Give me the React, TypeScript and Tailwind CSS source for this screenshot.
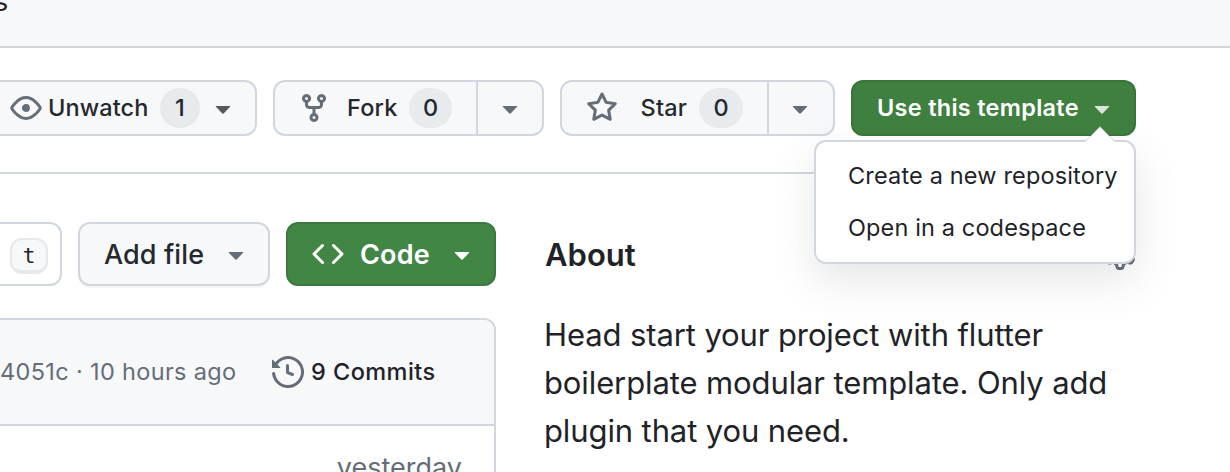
import type { ReactNode } from "react";

const ICONS = {
  eye: "M8 2c1.981 0 3.671.992 4.933 2.078 1.27 1.091 2.187 2.345 2.637 3.023a1.62 1.62 0 0 1 0 1.798c-.45.678-1.367 1.932-2.637 3.023C11.67 13.008 9.981 14 8 14c-1.981 0-3.671-.992-4.933-2.078C1.797 10.83.88 9.576.43 8.898a1.62 1.62 0 0 1 0-1.798c.45-.677 1.367-1.931 2.637-3.022C4.33 2.992 6.019 2 8 2ZM1.679 7.932a.12.12 0 0 0 0 .136c.411.622 1.241 1.75 2.366 2.717C5.176 11.758 6.527 12.5 8 12.5c1.473 0 2.825-.742 3.955-1.715 1.124-.967 1.954-2.096 2.366-2.717a.12.12 0 0 0 0-.136c-.412-.621-1.242-1.75-2.366-2.717C10.824 4.242 9.473 3.5 8 3.5c-1.473 0-2.825.742-3.955 1.715-1.124.967-1.954 2.096-2.366 2.717ZM8 10a2 2 0 1 1-.001-3.999A2 2 0 0 1 8 10Z",
  fork: "M5 5.372v.878c0 .414.336.75.75.75h4.5a.75.75 0 0 0 .75-.75v-.878a2.25 2.25 0 1 1 1.5 0v.878a2.25 2.25 0 0 1-2.25 2.25h-1.5v2.128a2.251 2.251 0 1 1-1.5 0V8.5h-1.5A2.25 2.25 0 0 1 3.5 6.25v-.878a2.25 2.25 0 1 1 1.5 0ZM5 3.25a.75.75 0 1 0-1.5 0 .75.75 0 0 0 1.5 0Zm6.75.75a.75.75 0 1 0 0-1.5.75.75 0 0 0 0 1.5Zm-3 8.75a.75.75 0 1 0-1.5 0 .75.75 0 0 0 1.5 0Z",
  star: "M8 .25a.75.75 0 0 1 .673.418l1.882 3.815 4.21.612a.75.75 0 0 1 .416 1.279l-3.046 2.97.719 4.192a.751.751 0 0 1-1.088.791L8 12.347l-3.766 1.98a.75.75 0 0 1-1.088-.79l.72-4.194L.818 6.374a.75.75 0 0 1 .416-1.28l4.21-.611L7.327.668A.75.75 0 0 1 8 .25Zm0 2.445L6.615 5.5a.75.75 0 0 1-.564.41l-3.097.45 2.24 2.184a.75.75 0 0 1 .216.664l-.528 3.084 2.769-1.456a.75.75 0 0 1 .698 0l2.77 1.456-.53-3.084a.75.75 0 0 1 .216-.664l2.24-2.183-3.096-.45a.75.75 0 0 1-.564-.41L8 2.694Z",
  code: "m11.28 3.22 4.25 4.25a.75.75 0 0 1 0 1.06l-4.25 4.25a.749.749 0 0 1-1.275-.326.749.749 0 0 1 .215-.734L13.94 8l-3.72-3.72a.749.749 0 0 1 .326-1.275.749.749 0 0 1 .734.215Zm-6.56 0a.751.751 0 0 1 1.042.018.751.751 0 0 1 .018 1.042L2.06 8l3.72 3.72a.749.749 0 0 1-.326 1.275.749.749 0 0 1-.734-.215L.47 8.53a.75.75 0 0 1 0-1.06Z",
  caret:
    "m4.427 7.427 3.396 3.396a.25.25 0 0 0 .354 0l3.396-3.396A.25.25 0 0 0 11.396 7H4.604a.25.25 0 0 0-.177.427Z",
  history:
    "m.427 1.927 1.215 1.215a8.002 8.002 0 1 1-1.6 5.685.75.75 0 1 1 1.493-.154 6.5 6.5 0 1 0 1.18-4.458l1.358 1.358A.25.25 0 0 1 3.896 6H.25A.25.25 0 0 1 0 5.75V2.104a.25.25 0 0 1 .427-.177ZM7.75 4a.75.75 0 0 1 .75.75v2.992l2.028.812a.75.75 0 0 1-.557 1.392l-2.5-1A.751.751 0 0 1 7 8.25v-3.5A.75.75 0 0 1 7.75 4Z",
  gear: "M8 0a8.2 8.2 0 0 1 .701.031C9.444.095 9.99.645 10.16 1.29l.288 1.107c.018.066.079.158.212.224.231.114.454.243.668.386.123.082.233.09.299.071l1.103-.303c.644-.176 1.392.021 1.82.63.27.385.506.792.704 1.218.315.675.111 1.422-.364 1.891l-.814.806c-.049.048-.098.147-.088.294.016.257.016.515 0 .772-.01.147.038.246.088.294l.814.806c.475.469.679 1.216.364 1.891a7.977 7.977 0 0 1-.704 1.217c-.428.61-1.176.807-1.82.63l-1.102-.302c-.067-.019-.177-.011-.3.071a5.909 5.909 0 0 1-.668.386c-.133.066-.194.158-.211.224l-.29 1.106c-.168.646-.715 1.196-1.458 1.26a8.006 8.006 0 0 1-1.402 0c-.743-.064-1.289-.614-1.458-1.26l-.289-1.106c-.018-.066-.079-.158-.212-.224a5.738 5.738 0 0 1-.668-.386c-.123-.082-.233-.09-.299-.071l-1.103.303c-.644.176-1.392-.021-1.82-.63a8.12 8.12 0 0 1-.704-1.218c-.315-.675-.111-1.422.363-1.891l.815-.806c.05-.048.098-.147.088-.294a6.214 6.214 0 0 1 0-.772c.01-.147-.038-.246-.088-.294l-.815-.806C.635 6.045.431 5.298.746 4.623a7.92 7.92 0 0 1 .704-1.217c.428-.61 1.176-.807 1.82-.63l1.102.302c.067.019.177.011.3-.071.214-.143.437-.272.668-.386.133-.066.194-.158.211-.224l.29-1.106C6.009.645 6.556.095 7.299.03 7.53.01 7.764 0 8 0Zm-.571 1.525c-.036.003-.108.036-.137.146l-.289 1.105c-.147.561-.549.967-.998 1.189-.173.086-.34.183-.5.29-.417.278-.97.423-1.529.27l-1.103-.303c-.109-.03-.175.016-.195.045-.22.312-.412.644-.573.99-.014.031-.021.11.059.19l.815.806c.411.406.562.957.53 1.456a4.709 4.709 0 0 0 0 .582c.032.499-.119 1.05-.53 1.456l-.815.806c-.081.08-.073.159-.059.19.162.346.353.677.573.989.02.03.085.076.195.046l1.102-.303c.56-.153 1.113-.008 1.53.27.161.107.328.204.501.29.447.222.85.629.997 1.189l.289 1.105c.029.109.101.143.137.146a6.6 6.6 0 0 0 1.142 0c.036-.003.108-.036.137-.146l.289-1.105c.147-.561.549-.967.998-1.189.173-.086.34-.183.5-.29.417-.278.97-.423 1.529-.27l1.103.303c.109.029.175-.016.195-.045.22-.313.411-.644.573-.99.014-.031.021-.11-.059-.19l-.815-.806c-.411-.406-.562-.957-.53-1.456a4.709 4.709 0 0 0 0-.582c-.032-.499.119-1.05.53-1.456l.815-.806c.081-.08.073-.159.059-.19a6.464 6.464 0 0 0-.573-.989c-.02-.03-.085-.076-.195-.046l-1.102.303c-.56.153-1.113.008-1.53-.27a4.44 4.44 0 0 0-.501-.29c-.447-.222-.85-.629-.997-1.189l-.289-1.105c-.029-.11-.101-.143-.137-.146a6.6 6.6 0 0 0-1.142 0ZM11 8a3 3 0 1 1-6 0 3 3 0 0 1 6 0ZM9.5 8a1.5 1.5 0 1 0-3.001.001A1.5 1.5 0 0 0 9.5 8Z",
};

function Icon({ name, className = "" }: { name: keyof typeof ICONS; className?: string }) {
  return (
    <svg viewBox="0 0 16 16" fill="currentColor" className={`size-8 shrink-0 ${className}`} aria-hidden="true">
      <path d={ICONS[name]} />
    </svg>
  );
}

function Counter({ children, className }: { children: ReactNode; className: string }) {
  return (
    <span className={`flex h-10 shrink-0 items-center justify-center rounded-full bg-[#e7ebed] ${className}`}>
      {children}
    </span>
  );
}

const outlineButton = "flex shrink-0 items-center rounded-xl border-2 border-[#d1d7de] bg-[#f6f8fa] text-[#25292e]";

export default function App() {
  return (
    <div className="flex h-[472px] w-[1230px] flex-col overflow-hidden bg-white font-['Inter',sans-serif] whitespace-nowrap text-[#1f2328]">
      <header className="h-12 shrink-0 overflow-hidden border-b-2 border-[#d1d7de] bg-[#f6f8fa]">
        <span className="-mt-[14px] -ml-[6px] block text-[27px] leading-8">s</span>
      </header>

      <div className="mr-[94px] flex h-[126px] shrink-0 items-start gap-4 border-b-2 border-[#d1d7de] pt-8 text-[23.5px] font-medium">
        <button className={`${outlineButton} -ml-5 h-14 w-[277px] pl-7`}>
          <Icon name="eye" className="text-[#656d76]" />
          <span className="ml-[6px] w-[112px] text-left tracking-[0.1px]">Unwatch</span>
          <Counter className="w-10">1</Counter>
          <Icon name="caret" className="ml-[7px] text-[#57595c]" />
        </button>

        <div className={`${outlineButton} h-14 w-[271px]`}>
          <button className="flex h-full w-[203px] items-center border-r-2 border-[#d1d7de] pl-[23px]">
            <Icon name="fork" className="text-[#656d76]" />
            <span className="ml-[17px] w-[62px] text-left tracking-[0.2px]">Fork</span>
            <Counter className="w-[43px]">0</Counter>
          </button>
          <button className="flex flex-1 justify-center">
            <Icon name="caret" className="text-[#656d76]" />
          </button>
        </div>

        <div className={`${outlineButton} h-14 w-[275px]`}>
          <button className="flex h-full w-[207px] items-center border-r-2 border-[#d1d7de] pl-6">
            <Icon name="star" className="text-[#656d76]" />
            <span className="ml-[22.5px] w-[58.5px] text-left tracking-[0.2px]">Star</span>
            <Counter className="w-11">0</Counter>
          </button>
          <button className="flex flex-1 pl-[15px]">
            <Icon name="caret" className="text-[#656d76]" />
          </button>
        </div>

        <div className="relative w-[285px] shrink-0">
          <button className="flex h-14 w-full items-center rounded-xl border-2 border-[#397539] bg-[#3f8040] pl-6 text-white">
            <span className="w-[209px] text-left font-semibold tracking-[0.28px]">Use this template</span>
            <Icon name="caret" className="text-[#d9e6d9]" />
          </button>
          <div className="absolute top-[60px] right-0 z-10 h-[124px] w-[322px] rounded-xl border-2 border-[#d1d7de] bg-white pt-2 font-normal text-[#1f2328] shadow-[0_16px_40px_rgba(80,84,88,0.15)]">
            <svg viewBox="0 0 32 17" className="absolute -top-4 right-[18px] h-[17px] w-8" aria-hidden="true">
              <path d="M0 17 16 0.8 32 17Z" fill="white" />
              <path d="M2 15 16 0.8 30 15" fill="none" stroke="#d1d7de" strokeWidth="1" />
            </svg>
            <div className="flex h-[52px] items-center pl-8 tracking-[0.16px]">Create a new repository</div>
            <div className="flex h-[52px] items-center pl-8 tracking-[0.13px]">Open in a codespace</div>
          </div>
        </div>
      </div>

      <main className="flex flex-1 pt-12">
        <section className="w-[496px] shrink-0">
          <div className="flex gap-4 text-[27px]">
            <div className="-ml-4 flex h-16 w-[78px] items-center justify-end rounded-xl border-2 border-[#d1d7de] pt-[3px] pr-3">
              <kbd className="flex h-9 w-[38px] items-center justify-center rounded-xl border-2 border-b-4 border-[#e7eaed] bg-[#f6f8fa] pt-1 font-['DejaVu_Sans_Mono',monospace] text-[21px]">
                t
              </kbd>
            </div>
            <button className={`${outlineButton} h-16 w-48 pl-6 font-medium shadow-[0_2px_0_rgba(31,35,40,0.04)]`}>
              <span className="w-[116px] pt-0.5 text-left tracking-[0.1px]">Add file</span>
              <Icon name="caret" className="text-[#656d76]" />
            </button>
            <button className="flex h-16 w-[210px] items-center rounded-xl border-2 border-[#3b7a3e] bg-[#428646] pl-6 text-white">
              <Icon name="code" />
              <span className="ml-4 w-[86px] pt-0.5 text-left font-semibold tracking-[0.2px]">Code</span>
              <Icon name="caret" />
            </button>
          </div>

          <div className="mt-8 -ml-4 h-[200px] overflow-hidden rounded-tr-xl border-2 border-[#d1d7de]">
            <div className="flex h-[106px] items-center border-b-2 border-[#d1d7de] bg-[#f6f8fa] pl-[14px] text-[23.5px]">
              <span className="w-[272px] tracking-[0.34px] text-[#656d76]">4051c · 10 hours ago</span>
              <Icon name="history" className="text-[#656d76]" />
              <span className="ml-[7px] font-medium tracking-[0.45px]">9 Commits</span>
            </div>
            <div className="pt-[23px] pr-8 text-right text-[27px] leading-[38px] text-[#656d76]">yesterday</div>
          </div>
        </section>

        <aside className="ml-12 w-[592px]">
          <div className="flex h-16 items-center justify-between">
            <h2 className="pt-0.5 pl-px text-[31px] font-semibold">About</h2>
            <Icon name="gear" className="text-[#656d76]" />
          </div>
          <p className="mt-[25px] text-[31px] leading-12 tracking-[-0.11px]">
            Head start your project with flutter
            <br />
            boilerplate modular template. Only add
            <br />
            plugin that you need.
          </p>
        </aside>
      </main>
    </div>
  );
}
